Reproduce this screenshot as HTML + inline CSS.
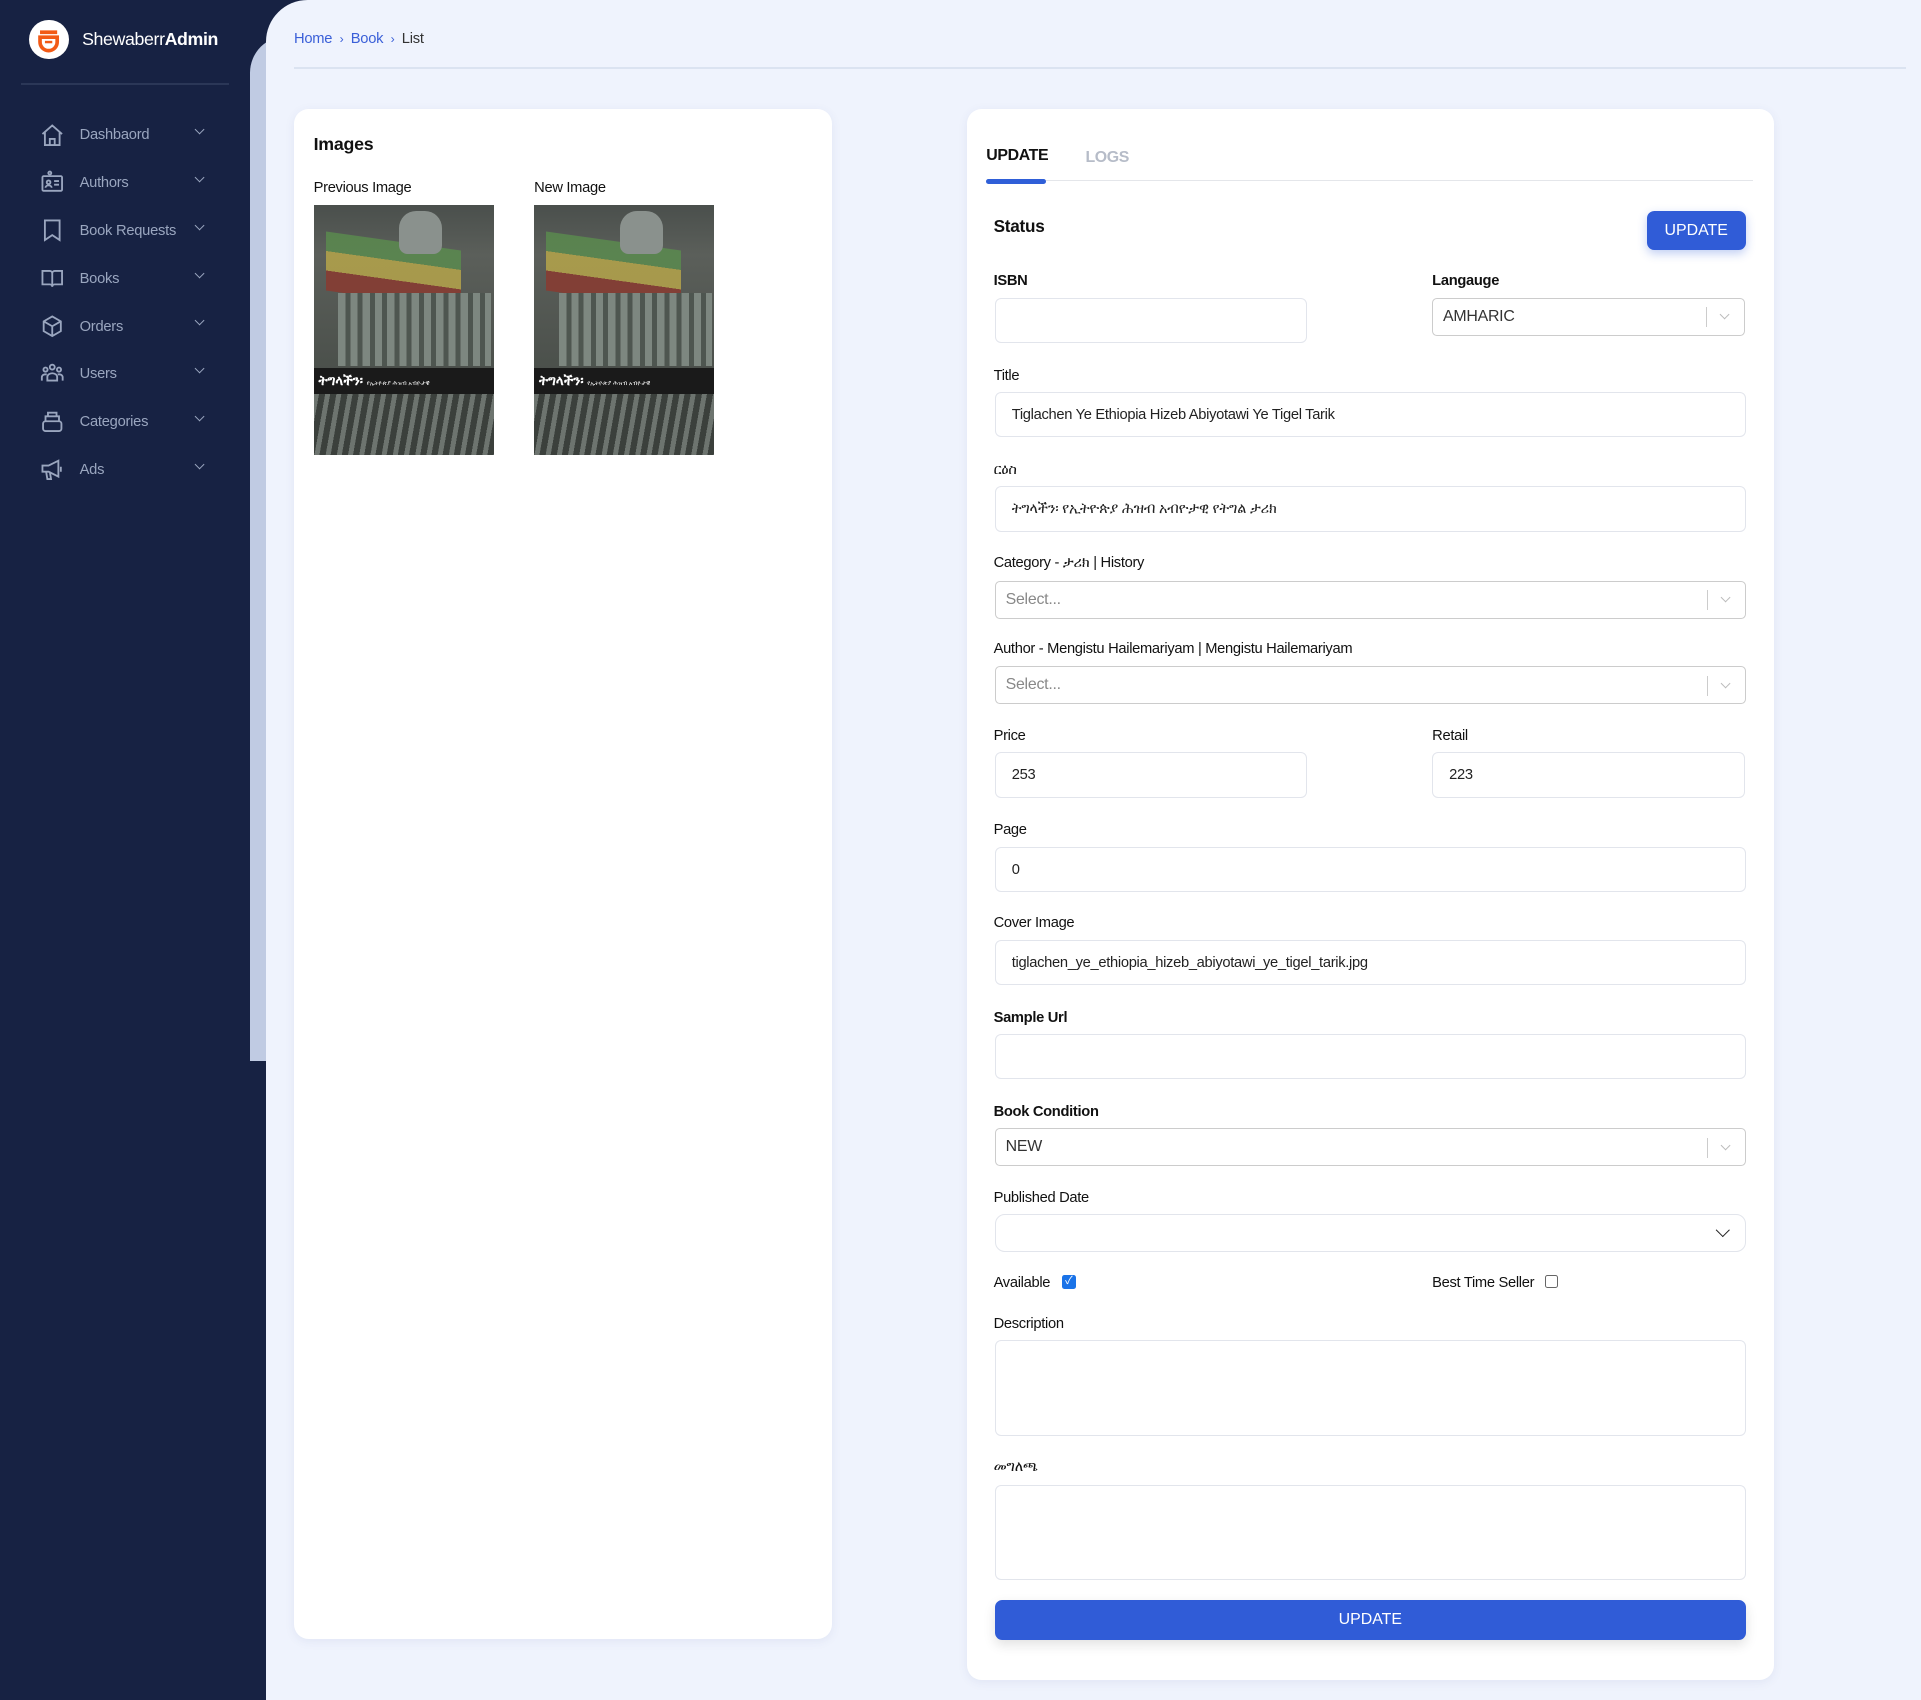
<!DOCTYPE html>
<html><head><meta charset="utf-8"><style>
html,body{margin:0;padding:0}
body{width:1568px;height:1388px;zoom:1.22513;overflow:hidden;background:#172243;font-family:"Liberation Sans","Noto Sans CJK SC",sans-serif;position:relative;color:#111}
.a{position:absolute}
.strip{left:204px;top:29px;width:40px;height:837px;background:#c0cbe3;border-top-left-radius:30px}
.main{left:217px;top:0;width:1351px;height:1388px;background:#eff3fd;border-top-left-radius:34px}
.bc{left:240px;top:25px;font-size:12px;color:#333;letter-spacing:-.2px}
.bc span.l{color:#3a5fd8}
.bc span.s{color:#3a5fd8;margin:0 6px;font-size:10px}
.hr{left:240px;top:55px;width:1316px;height:1px;background:#dbe3f1}
.card{background:#fff;border-radius:12px;box-shadow:0 2px 8px rgba(60,80,140,.08)}
.lbl{font-size:12px;color:#111;letter-spacing:-.25px}
.b{font-weight:bold}
.inp{border:1px solid #e2e5ec;border-radius:5px;height:37px;background:#fff;font-size:12px;box-sizing:border-box;padding:0 13px;line-height:36px;color:#222;letter-spacing:-.25px}
.sel{border:1px solid #ccc;border-radius:4px;height:31px;box-sizing:border-box;padding:0 8px;line-height:30px;font-size:13px;color:#333;background:#fff;letter-spacing:-.2px}
.sel .sep{position:absolute;right:30px;top:7px;width:1px;height:16px;background:#ccc}
.sel .ch{position:absolute;right:13px;top:10px;width:5px;height:5px;border-right:1.2px solid #bbb;border-bottom:1.2px solid #bbb;transform:rotate(45deg)}
.nav{left:33px;font-size:12px;color:#9aa6bf;width:140px;height:20px;letter-spacing:-.2px}
.nav svg{position:absolute;left:0;top:0}
.nav .t{position:absolute;left:32px;top:4px}
.nav .c{position:absolute;left:127px;top:3px;width:5px;height:5px;border-right:1.5px solid #9aa6bf;border-bottom:1.5px solid #9aa6bf;transform:rotate(45deg)}
.cover{width:147px;height:204px;overflow:hidden;background:linear-gradient(#4a4f4c,#5b5f5a 20%,#3f4540 100%)}
.cover .fl{position:absolute;left:10px;top:30px;width:110px;height:48px;background:linear-gradient(#5a8a4e 0 33%,#b5a44a 33% 66%,#8a3a30 66%);transform:skewY(8deg);opacity:.85}
.cover .fig{position:absolute;left:20px;top:72px;width:125px;height:60px;background:repeating-linear-gradient(90deg,#7d8780 0 6px,#4e5650 6px 10px)}
.cover .bar{position:absolute;left:0;top:133px;width:147px;height:22px;background:#1a1a1a;color:#fff;font-size:11px;font-weight:bold;padding-left:4px;line-height:22px;box-sizing:border-box}
.cover .bot{position:absolute;left:0;top:155px;width:147px;height:49px;background:repeating-linear-gradient(100deg,#6d746f 0 4px,#3b403c 4px 9px)}
.cover .head{position:absolute;left:70px;top:5px;width:35px;height:35px;background:#8a918d;border-radius:40% 40% 20% 20%}
</style></head><body>
<div class="a strip"></div>
<div class="a main"></div>

<div class="a" style="left:24px;top:16px;width:32px;height:32px;border-radius:50%;background:#fff"></div>
<svg class="a" style="left:24px;top:16px" width="32" height="32" viewBox="0 0 32 32"><path d="M9 10h14M9 14h14v4a7 7 0 0 1-14 0z" fill="none" stroke="#f25a16" stroke-width="3"/><path d="M13 18h6" stroke="#f25a16" stroke-width="2"/></svg>
<div class="a" style="left:67px;top:24px;font-size:14.5px;color:#fff;letter-spacing:-.3px">Shewaberr<b>Admin</b></div>
<div class="a" style="left:17px;top:68px;width:170px;height:1px;background:#2b3757"></div>

<div class="a nav" style="top:100px"><svg width="20" height="20" viewBox="0 0 20 20" fill="none" stroke="#9aa6bf" stroke-width="1.5"><path d="M2 9l8-7 8 7M4 7.5V18h12V7.5M8 18v-5h4v5"/></svg><span class="t">Dashbaord</span><span class="c"></span></div>
<div class="a nav" style="top:139px"><svg width="20" height="20" viewBox="0 0 20 20" fill="none" stroke="#9aa6bf" stroke-width="1.5"><rect x="2" y="5" width="16" height="12" rx="1"/><circle cx="8" cy="2.5" r="1.2"/><circle cx="7" cy="10" r="1.5"/><path d="M4.5 14.5a2.5 2 0 0 1 5 0M11.5 9h4M11.5 12h4"/></svg><span class="t">Authors</span><span class="c"></span></div>
<div class="a nav" style="top:178px"><svg width="20" height="20" viewBox="0 0 20 20" fill="none" stroke="#9aa6bf" stroke-width="1.5"><path d="M4 2h12v16l-6-4-6 4z"/></svg><span class="t">Book Requests</span><span class="c"></span></div>
<div class="a nav" style="top:217px"><svg width="20" height="20" viewBox="0 0 20 20" fill="none" stroke="#9aa6bf" stroke-width="1.5"><path d="M2 4h6a2 2 0 0 1 2 2v11a2 2 0 0 0-2-2H2zM18 4h-6a2 2 0 0 0-2 2v11a2 2 0 0 1 2-2h6z"/></svg><span class="t">Books</span><span class="c"></span></div>
<div class="a nav" style="top:256px"><svg width="20" height="20" viewBox="0 0 20 20" fill="none" stroke="#9aa6bf" stroke-width="1.5"><path d="M10 2l7 4v8l-7 4-7-4V6zM3 6l7 4 7-4M10 10v8"/></svg><span class="t">Orders</span><span class="c"></span></div>
<div class="a nav" style="top:295px"><svg width="20" height="20" viewBox="0 0 20 20" fill="none" stroke="#9aa6bf" stroke-width="1.5"><circle cx="10" cy="5" r="2"/><circle cx="4.5" cy="7" r="1.7"/><circle cx="15.5" cy="7" r="1.7"/><path d="M6 16v-3a4 3 0 0 1 8 0v3zM1.5 16v-3a3 2.5 0 0 1 4-2M18.5 16v-3a3 2.5 0 0 0-4-2"/></svg><span class="t">Users</span><span class="c"></span></div>
<div class="a nav" style="top:334px"><svg width="20" height="20" viewBox="0 0 20 20" fill="none" stroke="#9aa6bf" stroke-width="1.5"><rect x="2.5" y="10" width="15" height="8" rx="2"/><path d="M4.5 10V6h11v4M6.5 6V3h7v3"/></svg><span class="t">Categories</span><span class="c"></span></div>
<div class="a nav" style="top:373px"><svg width="20" height="20" viewBox="0 0 20 20" fill="none" stroke="#9aa6bf" stroke-width="1.5"><path d="M2 7h5l8-4v13l-8-4H2zM5 12l1 6h3l-1-6M17 8v4"/></svg><span class="t">Ads</span><span class="c"></span></div>

<div class="a bc"><span class="l">Home</span><span class="s">›</span><span class="l">Book</span><span class="s">›</span>List</div>
<div class="a hr"></div>

<div class="a card" style="left:240px;top:89px;width:439px;height:1249px"></div>
<div class="a b" style="left:256px;top:109px;font-size:14.5px;letter-spacing:-.2px">Images</div>
<div class="a lbl" style="left:256px;top:147px">Previous Image</div>
<div class="a lbl" style="left:436px;top:147px">New Image</div>
<div class="a cover" style="left:256px;top:167px"><div class="fl"></div><div class="head"></div><div class="fig"></div><div class="bar">ትግላችን፡ <span style="font-size:5px;font-weight:normal">የኢትዮጵያ ሕዝብ አብዮታዊ</span></div><div class="bot"></div></div>
<div class="a cover" style="left:436px;top:167px"><div class="fl"></div><div class="head"></div><div class="fig"></div><div class="bar">ትግላችን፡ <span style="font-size:5px;font-weight:normal">የኢትዮጵያ ሕዝብ አብዮታዊ</span></div><div class="bot"></div></div>

<div class="a card" style="left:789px;top:89px;width:659px;height:1282px"></div>
<div class="a b" style="left:805px;top:120px;font-size:13px;letter-spacing:-.3px">UPDATE</div>
<div class="a b" style="left:886px;top:122px;font-size:13px;color:#b6bcc8;letter-spacing:-.3px">LOGS</div>
<div class="a" style="left:805px;top:147px;width:626px;height:1px;background:#e4e6ea"></div>
<div class="a" style="left:805px;top:146px;width:49px;height:4px;background:#2f5fd8;border-radius:2px"></div>
<div class="a b" style="left:811px;top:176px;font-size:14px;letter-spacing:-.2px">Status</div>
<div class="a" style="left:1344px;top:172px;width:81px;height:32px;background:#305cd7;border-radius:6px;color:#fff;font-size:13px;text-align:center;line-height:32px;box-shadow:0 3px 8px rgba(48,92,215,.3)">UPDATE</div>

<div class="a lbl b" style="left:811px;top:223px">ISBN</div>
<div class="a inp" style="left:812px;top:243px;width:255px"></div>
<div class="a lbl b" style="left:1169px;top:223px">Langauge</div>
<div class="a sel" style="left:1169px;top:243px;width:255px">AMHARIC<span class="sep"></span><span class="ch"></span></div>

<div class="a lbl" style="left:811px;top:300px">Title</div>
<div class="a inp" style="left:812px;top:320px;width:613px">Tiglachen Ye Ethiopia Hizeb Abiyotawi Ye Tigel Tarik</div>
<div class="a lbl" style="left:811px;top:377px">ርዕስ</div>
<div class="a inp" style="left:812px;top:397px;width:613px">ትግላችን፡ የኢትዮጵያ ሕዝብ አብዮታዊ የትግል ታሪክ</div>

<div class="a lbl" style="left:811px;top:453px">Category - ታሪክ | History</div>
<div class="a sel" style="left:812px;top:474px;width:613px;color:#888">Select...<span class="sep"></span><span class="ch"></span></div>
<div class="a lbl" style="left:811px;top:523px">Author - Mengistu Hailemariyam | Mengistu Hailemariyam</div>
<div class="a sel" style="left:812px;top:544px;width:613px;color:#888">Select...<span class="sep"></span><span class="ch"></span></div>

<div class="a lbl" style="left:811px;top:594px">Price</div>
<div class="a inp" style="left:812px;top:614px;width:255px">253</div>
<div class="a lbl" style="left:1169px;top:594px">Retail</div>
<div class="a inp" style="left:1169px;top:614px;width:255px">223</div>

<div class="a lbl" style="left:811px;top:671px">Page</div>
<div class="a inp" style="left:812px;top:691px;width:613px">0</div>
<div class="a lbl" style="left:811px;top:747px">Cover Image</div>
<div class="a inp" style="left:812px;top:767px;width:613px">tiglachen_ye_ethiopia_hizeb_abiyotawi_ye_tigel_tarik.jpg</div>
<div class="a lbl b" style="left:811px;top:824px">Sample Url</div>
<div class="a inp" style="left:812px;top:844px;width:613px"></div>

<div class="a lbl b" style="left:811px;top:901px">Book Condition</div>
<div class="a sel" style="left:812px;top:921px;width:613px">NEW<span class="sep"></span><span class="ch"></span></div>

<div class="a lbl" style="left:811px;top:971px">Published Date</div>
<div class="a inp" style="left:812px;top:991px;width:613px;height:31px;border-radius:8px"></div>
<div class="a" style="left:1402px;top:1000px;width:7px;height:7px;border-right:1.5px solid #222;border-bottom:1.5px solid #222;transform:rotate(45deg)"></div>

<div class="a lbl" style="left:811px;top:1041px">Available</div>
<div class="a" style="left:867px;top:1041px;width:11px;height:11px;background:#1a73e8;border-radius:2px;color:#fff;font-size:9px;line-height:11px;text-align:center">✓</div>
<div class="a lbl" style="left:1169px;top:1041px">Best Time Seller</div>
<div class="a" style="left:1261px;top:1041px;width:9px;height:9px;border:1px solid #666;border-radius:2px"></div>

<div class="a lbl" style="left:811px;top:1074px">Description</div>
<div class="a inp" style="left:812px;top:1094px;width:613px;height:78px"></div>
<div class="a lbl" style="left:811px;top:1191px">መግለጫ</div>
<div class="a inp" style="left:812px;top:1212px;width:613px;height:78px"></div>

<div class="a" style="left:812px;top:1306px;width:613px;height:33px;background:#305cd7;border-radius:6px;color:#fff;font-size:13px;text-align:center;line-height:33px;box-shadow:0 4px 10px rgba(0,0,0,.12)">UPDATE</div>
</body></html>
